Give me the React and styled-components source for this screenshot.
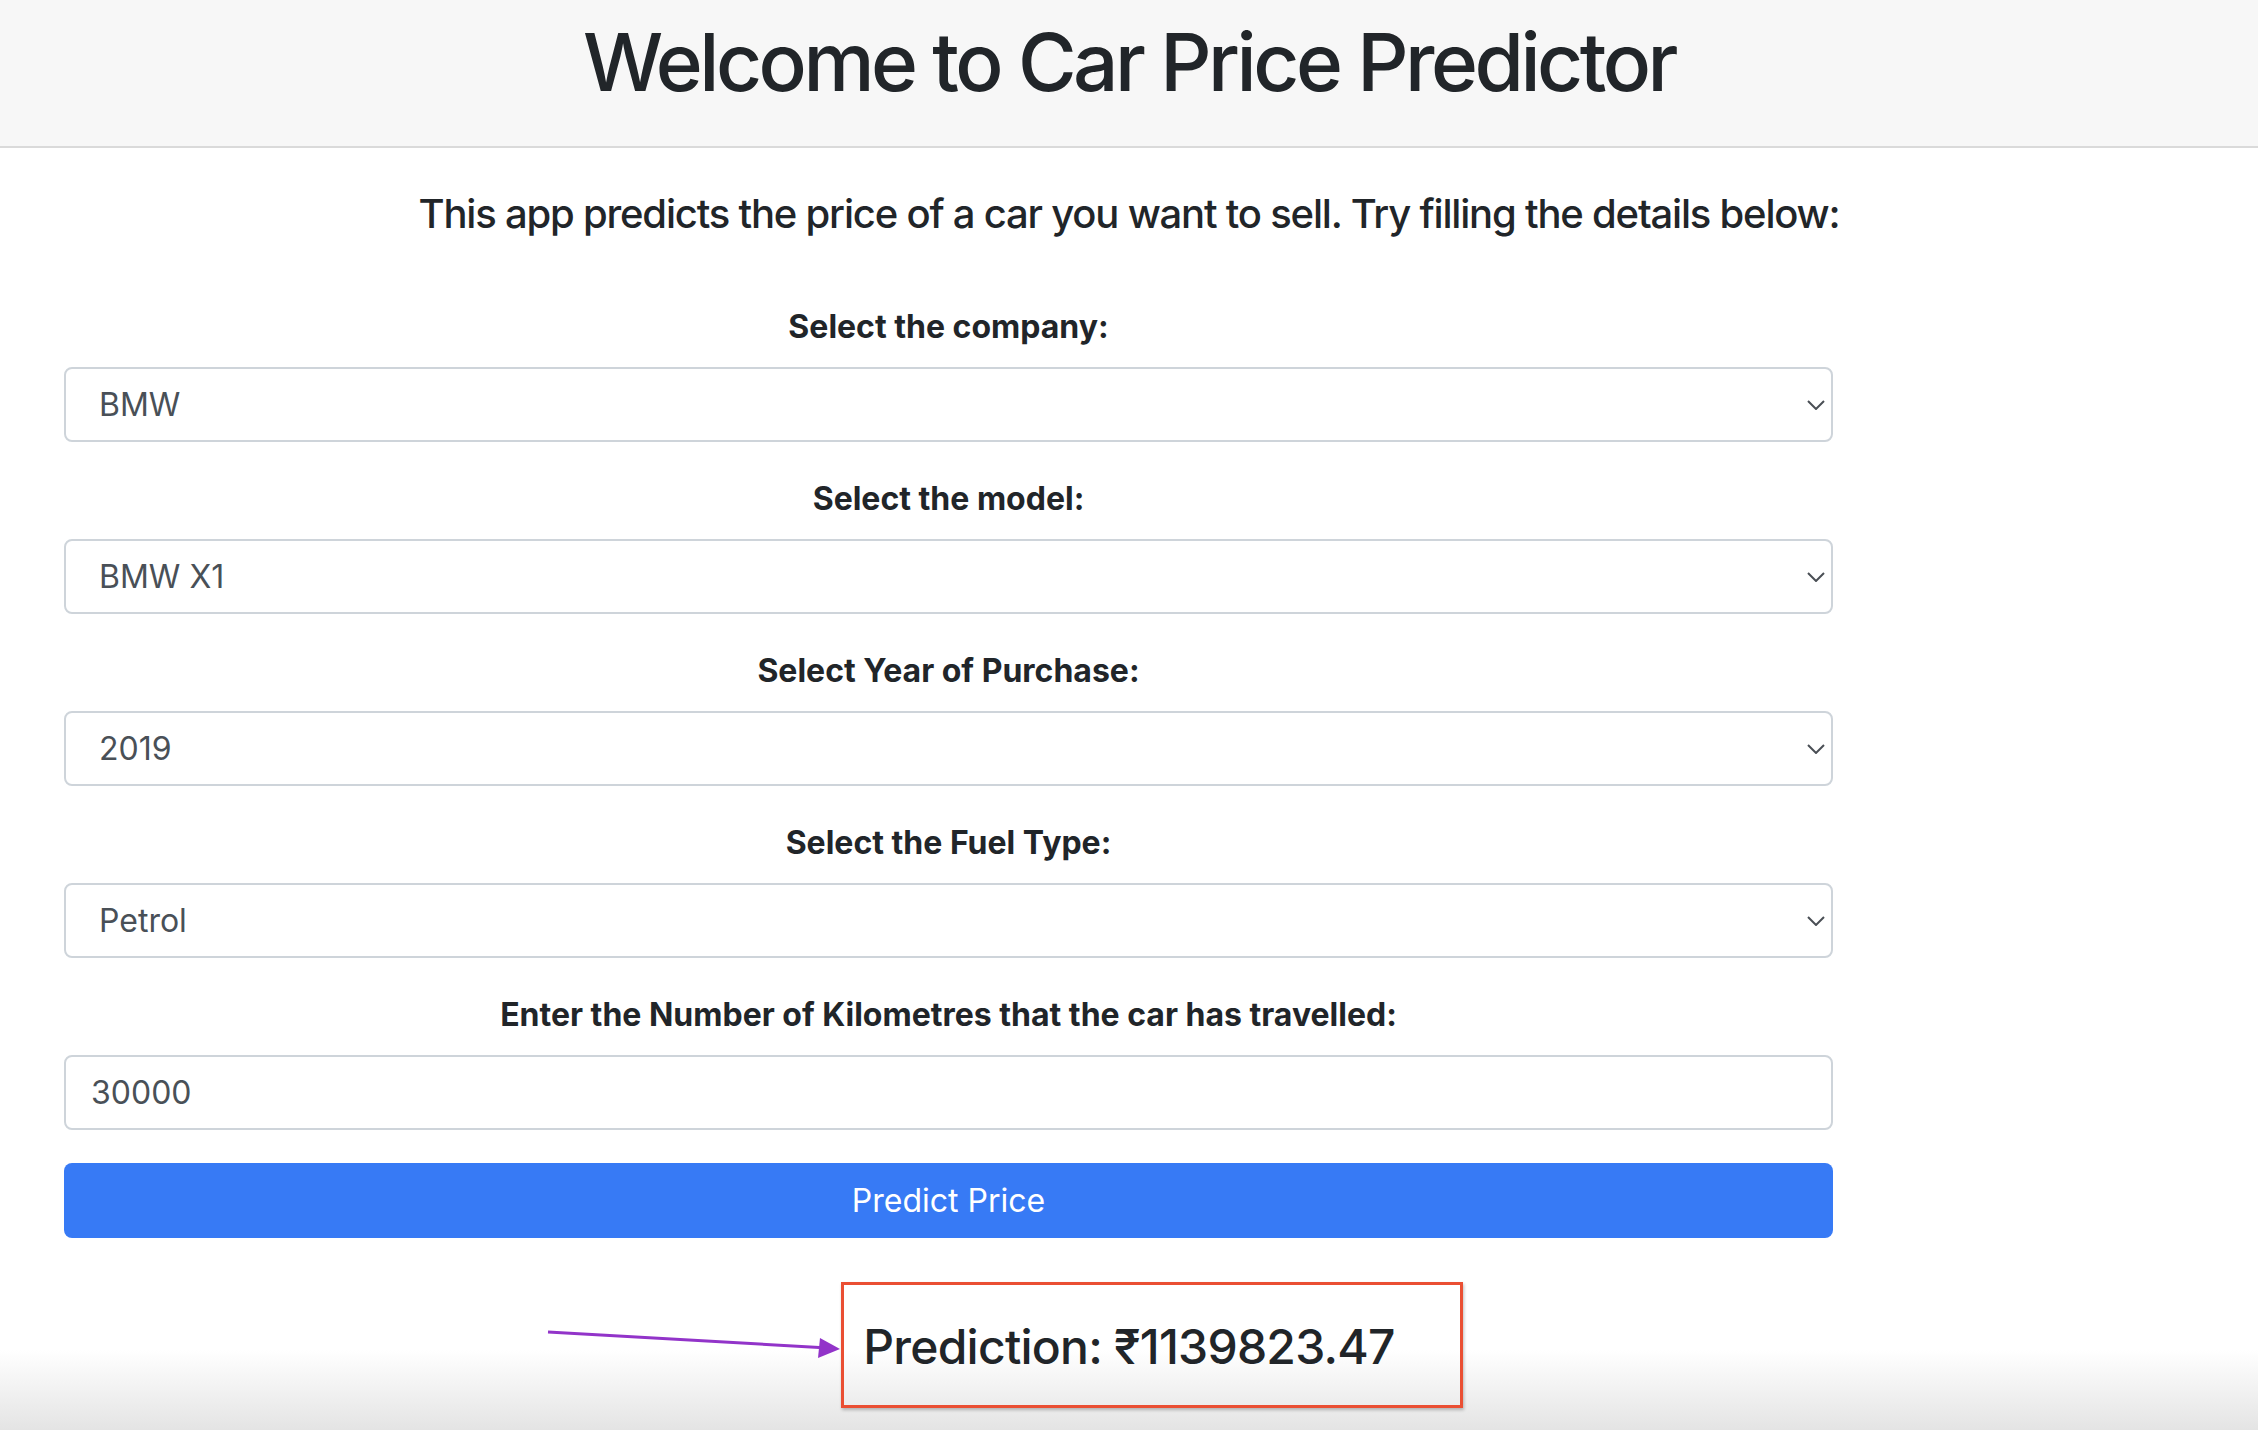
import React from "react";
import styled, { createGlobalStyle } from "styled-components";

const GlobalStyle = createGlobalStyle`
  html, body {
    margin: 0;
    padding: 0;
  }
  body {
    font-family: Inter, "Noto Sans", "Liberation Sans", sans-serif;
    color: #212529;
    background: #fff;
  }
  * {
    box-sizing: border-box;
  }
`;

const fields = [
  { label: "Select the company:", value: "BMW", options: ["BMW", "Audi", "Honda", "Hyundai", "Toyota"] },
  { label: "Select the model:", value: "BMW X1", options: ["BMW X1", "BMW 3 Series", "BMW 5 Series", "BMW 7 Series"] },
  { label: "Select Year of Purchase:", value: "2019", options: ["2019", "2018", "2017", "2016", "2015"] },
  { label: "Select the Fuel Type:", value: "Petrol", options: ["Petrol", "Diesel", "LPG"] },
];

export default function App() {
  return (
    <Page>
      <GlobalStyle />
      <Header>
        <Title>Welcome to Car Price Predictor</Title>
      </Header>
      <Intro>This app predicts the price of a car you want to sell. Try filling the details below:</Intro>

      <Form onSubmit={(e) => e.preventDefault()}>
        {fields.map((f) => (
          <Group key={f.label}>
            <Label>{f.label}</Label>
            <SelectWrap>
              <Select defaultValue={f.value}>
                {f.options.map((o) => (
                  <option key={o} value={o}>
                    {o}
                  </option>
                ))}
              </Select>
              <Chevron width="18" height="10" viewBox="0 0 18 10">
                <path d="M1 1l8 8 8-8" fill="none" stroke="#4a4f55" strokeWidth="2" />
              </Chevron>
            </SelectWrap>
          </Group>
        ))}
        <Group>
          <Label>Enter the Number of Kilometres that the car has travelled:</Label>
          <Input type="text" defaultValue="30000" />
        </Group>
        <Button type="submit">Predict Price</Button>
      </Form>

      <ResultRow>
        <Result>
          Prediction: ₹1139823.47
          <Highlight />
          <Arrow width="300" height="30" viewBox="0 0 300 30">
            <path d="M0 4 L280 20" stroke="#9234c9" strokeWidth="3" fill="none" />
            <path d="M272 10 L292 21 L270 30 Z" fill="#9234c9" />
          </Arrow>
        </Result>
      </ResultRow>
    </Page>
  );
}

const Page = styled.div`
  min-height: 1430px;
  background: linear-gradient(to bottom, #ffffff 0, #ffffff 1350px, #e4e4e4 1430px);
  overflow: hidden;
`;

const Header = styled.header`
  height: 148px;
  background: #f7f7f7;
  border-bottom: 2px solid #dadada;
  display: flex;
  justify-content: center;
`;

const Title = styled.h1`
  margin: 14px 0 0;
  font-size: 80px;
  font-weight: 500;
  line-height: 1.2;
  letter-spacing: -3.5px;
  color: #212529;
`;

const Intro = styled.h5`
  margin: 42px 0 0;
  text-align: center;
  font-size: 40px;
  font-weight: 500;
  line-height: 1.2;
  letter-spacing: -1.2px;
  color: #212529;
`;

const Form = styled.form`
  width: 1769px;
  margin: 65px 0 0 64px;
`;

const Group = styled.div`
  margin-bottom: 33px;
`;

const Label = styled.label`
  display: block;
  text-align: center;
  font-size: 32px;
  font-weight: 700;
  line-height: 48px;
  margin-bottom: 16px;
  color: #212529;
`;

const SelectWrap = styled.div`
  position: relative;
`;

const Select = styled.select`
  display: block;
  width: 100%;
  height: 75px;
  padding: 0 60px 0 33px;
  font-family: inherit;
  font-size: 32px;
  color: #495057;
  background: #fff;
  border: 2px solid #ced4da;
  border-radius: 8px;
  appearance: none;
  outline: none;
`;

const Chevron = styled.svg`
  position: absolute;
  right: 8px;
  top: 33px;
  pointer-events: none;
`;

const Input = styled.input`
  display: block;
  width: 100%;
  height: 75px;
  padding: 0 25px;
  font-family: inherit;
  font-size: 32px;
  color: #495057;
  background: #fff;
  border: 2px solid #ced4da;
  border-radius: 8px;
  outline: none;
`;

const Button = styled.button`
  display: block;
  width: 100%;
  height: 75px;
  font-family: inherit;
  font-size: 32px;
  font-weight: 400;
  color: #fff;
  background: #377af5;
  border: none;
  border-radius: 8px;
`;

const ResultRow = styled.div`
  display: flex;
  justify-content: center;
  margin-top: 80px;
`;

const Result = styled.h4`
  position: relative;
  margin: 0;
  font-size: 48px;
  font-weight: 500;
  line-height: 58px;
  letter-spacing: -0.75px;
  color: #212529;
`;

const Highlight = styled.span`
  position: absolute;
  top: -36px;
  bottom: -32px;
  left: -22px;
  right: -68px;
  border: 3px solid #ea4f33;
  box-shadow: 1px 2px 3px rgba(0, 0, 0, 0.25);
`;

const Arrow = styled.svg`
  position: absolute;
  left: -315px;
  top: 10px;
  overflow: visible;
`;
